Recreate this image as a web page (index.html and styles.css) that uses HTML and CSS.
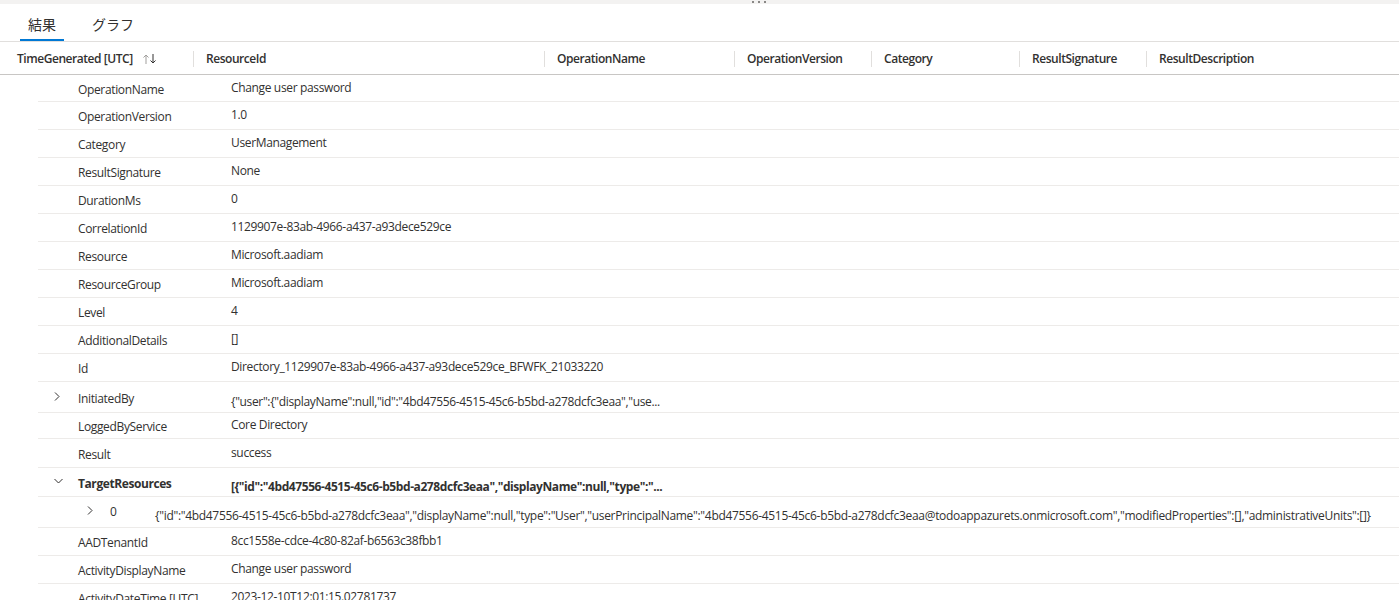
FILE: index.html
```
<!DOCTYPE html>
<html>
<head>
<meta charset="utf-8">
<link rel="stylesheet" href="styles.css">
</head>
<body>
<div class="topstrip"><span class="dots"><i></i><i></i><i></i></span></div>
<div class="tabs">
  <div class="tab active">結果</div>
  <div class="tab">グラフ</div>
</div>
<div class="header">
  <div class="hcell c1">TimeGenerated [UTC]
    <svg class="sort" width="16" height="12" viewBox="0 0 16 12"><path d="M4 11V2M1.5 4.5L4 2l2.5 2.5" stroke="#a19f9d" stroke-width="1" fill="none"/><path d="M11 1v9M8.5 7.5L11 10l2.5-2.5" stroke="#323130" stroke-width="1" fill="none"/></svg>
  </div>
  <div class="sep"></div><div class="hcell c2">ResourceId</div>
  <div class="sep"></div><div class="hcell c3">OperationName</div>
  <div class="sep"></div><div class="hcell c4">OperationVersion</div>
  <div class="sep"></div><div class="hcell c5">Category</div>
  <div class="sep"></div><div class="hcell c6">ResultSignature</div>
  <div class="sep"></div><div class="hcell c7">ResultDescription</div>
</div>
<div class="rows">
  <div class="row first"><div class="exp"></div><div class="key">OperationName</div><div class="val">Change user password</div></div>
  <div class="row"><div class="exp"></div><div class="key">OperationVersion</div><div class="val">1.0</div></div>
  <div class="row"><div class="exp"></div><div class="key">Category</div><div class="val">UserManagement</div></div>
  <div class="row"><div class="exp"></div><div class="key">ResultSignature</div><div class="val">None</div></div>
  <div class="row"><div class="exp"></div><div class="key">DurationMs</div><div class="val">0</div></div>
  <div class="row"><div class="exp"></div><div class="key">CorrelationId</div><div class="val">1129907e-83ab-4966-a437-a93dece529ce</div></div>
  <div class="row"><div class="exp"></div><div class="key">Resource</div><div class="val">Microsoft.aadiam</div></div>
  <div class="row"><div class="exp"></div><div class="key">ResourceGroup</div><div class="val">Microsoft.aadiam</div></div>
  <div class="row"><div class="exp"></div><div class="key">Level</div><div class="val">4</div></div>
  <div class="row"><div class="exp"></div><div class="key">AdditionalDetails</div><div class="val">[]</div></div>
  <div class="row"><div class="exp"></div><div class="key">Id</div><div class="val">Directory_1129907e-83ab-4966-a437-a93dece529ce_BFWFK_21033220</div></div>
  <div class="row tall"><div class="exp"><svg width="6" height="9" viewBox="0 0 6 9"><path d="M1 .5l4 4-4 4" stroke="#323130" fill="none"/></svg></div><div class="key">InitiatedBy</div><div class="val low">{"user":{"displayName":null,"id":"4bd47556-4515-45c6-b5bd-a278dcfc3eaa","use...</div></div>
  <div class="row short"><div class="exp"></div><div class="key">LoggedByService</div><div class="val">Core Directory</div></div>
  <div class="row mid"><div class="exp"></div><div class="key">Result</div><div class="val">success</div></div>
  <div class="row mid"><div class="exp"><svg width="9" height="6" viewBox="0 0 9 6"><path d="M.5 1l4 4 4-4" stroke="#323130" fill="none"/></svg></div><div class="key bold">TargetResources</div><div class="val low bold">[{"id":"4bd47556-4515-45c6-b5bd-a278dcfc3eaa","displayName":null,"type":"...</div></div>
  <div class="row tall sub"><div class="exp2"><svg width="6" height="9" viewBox="0 0 6 9"><path d="M1 .5l4 4-4 4" stroke="#323130" fill="none"/></svg></div><div class="key2">0</div><div class="val2 low">{"id":"4bd47556-4515-45c6-b5bd-a278dcfc3eaa","displayName":null,"type":"User","userPrincipalName":"4bd47556-4515-45c6-b5bd-a278dcfc3eaa@todoappazurets.onmicrosoft.com","modifiedProperties":[],"administrativeUnits":[]}</div></div>
  <div class="row"><div class="exp"></div><div class="key">AADTenantId</div><div class="val">8cc1558e-cdce-4c80-82af-b6563c38fbb1</div></div>
  <div class="row"><div class="exp"></div><div class="key">ActivityDisplayName</div><div class="val">Change user password</div></div>
  <div class="row"><div class="exp"></div><div class="key">ActivityDateTime [UTC]</div><div class="val">2023-12-10T12:01:15.02781737</div></div>
</div>
</body>
</html>
```
FILE: styles.css
```
html, body {
  margin: 0;
  padding: 0;
  background: #fff;
  overflow: hidden;
}
body {
  font-family: "Open Sans", "Noto Sans", "Noto Sans CJK JP", sans-serif;
  color: #323130;
  font-size: 12px;
  letter-spacing: -0.35px;
  width: 1399px;
  height: 600px;
}
.topstrip {
  height: 4px;
  background: #f3f2f1;
  position: relative;
}
.dots {
  position: absolute;
  left: 752px;
  top: 1px;
  display: flex;
  gap: 4px;
}
.dots i {
  display: block;
  width: 2px;
  height: 2px;
  background: #8a8886;
}
.tabs {
  display: flex;
  padding-left: 20px;
  gap: 20px;
  border-bottom: 1px solid #e1dfdd;
  box-sizing: border-box;
  height: 38px;
}
.tab {
  font-family: "Noto Sans CJK JP", sans-serif;
  font-size: 14px;
  letter-spacing: 0;
  padding: 0 8px;
  line-height: 40px;
  height: 37px;
  box-sizing: border-box;
  border-bottom: 2px solid transparent;
  color: #323130;
}
.tab.active {
  border-bottom-color: #0078d4;
}
.header {
  display: flex;
  align-items: center;
  padding-left: 5px;
  padding-top: 1px;
  box-sizing: border-box;
  height: 33px;
  border-bottom: 1px solid #c8c6c4;
  font-weight: 600;
  font-size: 12px;
  letter-spacing: -0.45px;
}
.hcell {
  padding-left: 12px;
  box-sizing: border-box;
  white-space: nowrap;
  display: flex;
  align-items: center;
  flex-shrink: 0;
}
.sep {
  width: 1px;
  height: 16px;
  background: #e1dfdd;
  flex-shrink: 0;
}
.c1 { width: 188px; }
.c2 { width: 350px; }
.c3 { width: 189px; }
.c4 { width: 136px; }
.c5 { width: 147px; }
.c6 { width: 126px; }
.c7 { width: 200px; }
.sort {
  margin-left: 9px;
}
.rows {
  margin-left: 38px;
}
.row {
  display: flex;
  height: 27px;
  border-bottom: 1px solid #edebe9;
  align-items: center;
  white-space: nowrap;
}
.row > div { flex-shrink: 0; }
.row.first { height: 26px; }
.row.tall { height: 30px; }
.row.short { height: 25px; }
.row.mid { height: 28px; }
.exp {
  width: 40px;
  padding-left: 16px;
  box-sizing: border-box;
  display: flex;
  align-items: center;
}
.exp svg { display: block; margin-top: -2px; }
.key {
  width: 153px;
  padding-top: 2px;
}
.val {
  margin-top: -2px;
}
.val.low {
  margin-top: 8px;
}
.bold { font-weight: 700; letter-spacing: -0.42px; }
.exp2 {
  width: 72px;
  padding-left: 49px;
  box-sizing: border-box;
  display: flex;
  align-items: center;
}
.exp2 svg { display: block; margin-top: -4px; }
.key2 {
  width: 45px;
  margin-top: -2px;
}
.val2 {
  margin-top: 6px;
  letter-spacing: -0.31px;
}
```
